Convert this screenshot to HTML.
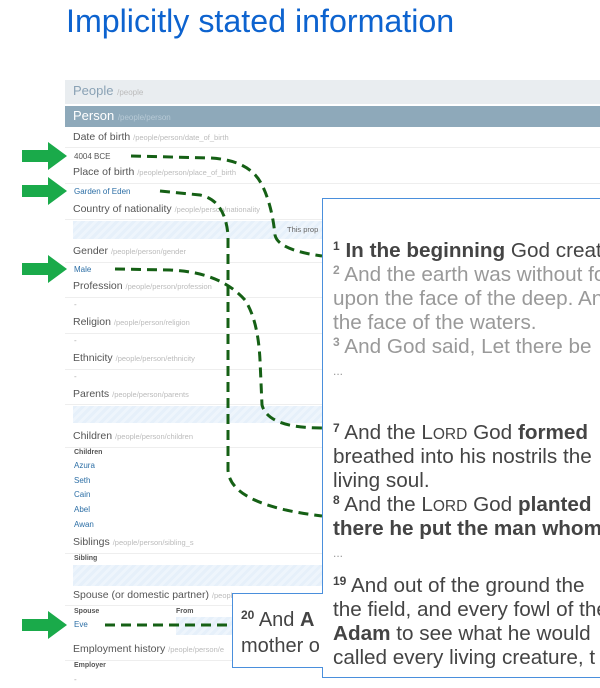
<!DOCTYPE html>
<html><head><meta charset="utf-8"><style>
*{margin:0;padding:0;box-sizing:border-box}
body{width:600px;height:688px;background:#fff;position:relative;overflow:hidden;font-family:"Liberation Sans",Arial,sans-serif}
.a{position:absolute;white-space:nowrap}
.t{left:66px;top:3px;font-size:32.2px;color:#0d63cf}
.lab{font-size:10.5px;color:#555;left:73px}
.lab i{font-style:normal;font-size:7.5px;color:#bbb}
.val{font-size:8px;color:#2d6fa6;left:74px}
.sub{font-size:7px;color:#555;font-weight:bold;left:74px}
.dash{font-size:8px;color:#aaa;left:74px}
.line{position:absolute;left:65px;right:0;height:1px;background:#eee}
.strip{position:absolute;left:73px;right:0;background:repeating-linear-gradient(135deg,#e6f0fa 0 3px,#eef5fc 3px 6px)}
.box{position:absolute;border:1.5px solid #4a8fdc;background:#fff}
.bt{position:absolute;left:10px;font-size:20.7px;color:#444;white-space:nowrap;line-height:24px;height:24px}
.g{color:#999}
.bt sup{font-size:12px;vertical-align:baseline;position:relative;top:-7px;line-height:0;font-weight:bold}
.sc{font-size:15.5px}
</style></head><body>
<div class="a t">Implicitly stated information</div>
<div class="a" style="left:65px;top:80px;width:535px;height:24px;background:#e9edf0"></div>
<div class="a" style="left:73px;top:83px;font-size:13px;color:#8aa2b5">People <span style="font-size:8px;color:#bbb">/people</span></div>
<div class="a" style="left:65px;top:106px;width:535px;height:21px;background:#8ea9ba"></div>
<div class="a" style="left:73px;top:108px;font-size:13px;color:#fff">Person <span style="font-size:8px;color:#b8cad6">/people/person</span></div>

<div class="a lab" style="top:131px">Date of birth <i>/people/person/date_of_birth</i></div>
<div class="line" style="top:147px"></div>
<div class="a val" style="top:152px;color:#555">4004 BCE</div>
<div class="a lab" style="top:166px">Place of birth <i>/people/person/place_of_birth</i></div>
<div class="line" style="top:183px"></div>
<div class="a val" style="top:187px">Garden of Eden</div>
<div class="a lab" style="top:203px">Country of nationality <i>/people/person/nationality</i></div>
<div class="line" style="top:219px"></div>
<div class="strip" style="top:221px;height:18px"></div>
<div class="a" style="left:287px;top:225px;font-size:7.5px;color:#666">This prop</div>
<div class="a lab" style="top:245px">Gender <i>/people/person/gender</i></div>
<div class="line" style="top:262px"></div>
<div class="a val" style="top:265px">Male</div>
<div class="a lab" style="top:280px">Profession <i>/people/person/profession</i></div>
<div class="line" style="top:297px"></div>
<div class="a dash" style="top:300px">-</div>
<div class="a lab" style="top:316px">Religion <i>/people/person/religion</i></div>
<div class="line" style="top:333px"></div>
<div class="a dash" style="top:336px">-</div>
<div class="a lab" style="top:352px">Ethnicity <i>/people/person/ethnicity</i></div>
<div class="line" style="top:369px"></div>
<div class="a dash" style="top:372px">-</div>
<div class="a lab" style="top:388px">Parents <i>/people/person/parents</i></div>
<div class="line" style="top:404px"></div>
<div class="strip" style="top:406px;height:17px"></div>
<div class="a lab" style="top:430px">Children <i>/people/person/children</i></div>
<div class="line" style="top:447px"></div>
<div class="a sub" style="top:449px">Children</div>
<div class="a val" style="top:461px">Azura</div>
<div class="a val" style="top:476px">Seth</div>
<div class="a val" style="top:490px">Cain</div>
<div class="a val" style="top:505px">Abel</div>
<div class="a val" style="top:520px">Awan</div>
<div class="a lab" style="top:536px">Siblings <i>/people/person/sibling_s</i></div>
<div class="line" style="top:553px"></div>
<div class="a sub" style="top:555px">Sibling</div>
<div class="strip" style="top:565px;height:21px"></div>
<div class="a lab" style="top:589px">Spouse (or domestic partner) <i>/people</i></div>
<div class="line" style="top:605px"></div>
<div class="a sub" style="top:608px">Spouse</div>
<div class="a sub" style="left:176px;top:608px">From</div>
<div class="strip" style="left:176px;right:auto;width:60px;top:617px;height:18px"></div>
<div class="a val" style="top:620px">Eve</div>
<div class="a lab" style="top:643px">Employment history <i>/people/person/e</i></div>
<div class="line" style="top:660px"></div>
<div class="a sub" style="top:662px">Employer</div>
<div class="a dash" style="top:675px">-</div>

<svg class="a" style="left:0;top:0" width="600" height="688">
<g fill="#1aaa4a">
<polygon points="22,150 48,150 48,142 67,156 48,170 48,162 22,162"/>
<polygon points="22,185 48,185 48,177 67,191 48,205 48,197 22,197"/>
<polygon points="22,263 48,263 48,255 67,269 48,283 48,275 22,275"/>
<polygon points="22,619 48,619 48,611 67,625 48,639 48,631 22,631"/>
</g>
<g fill="none" stroke="#156015" stroke-width="3" stroke-dasharray="10,6">
<path d="M131,156 L210,158 Q250,160 262,185 Q272,205 275,235 Q278,250 322,256"/>
<path d="M160,191 L200,195 Q225,200 228,235 L228,470 Q230,505 322,516"/>
<path d="M115,269 L170,270 Q220,272 245,300 Q258,320 260,360 L262,405 Q268,428 322,428"/>
<path d="M105,625 L232,625"/>
</g>
</svg>

<div class="box" style="left:322px;top:198px;width:290px;height:480px">
<div class="bt" style="top:40px"><sup>1</sup> <b>In the beginning</b> God created</div>
<div class="bt g" style="top:64px"><sup>2</sup> And the earth was without form</div>
<div class="bt g" style="top:88px">upon the face of the deep. And</div>
<div class="bt g" style="top:112px">the face of the waters.</div>
<div class="bt g" style="top:136px"><sup>3</sup> And God said, Let there be</div>
<div class="bt g" style="top:160px;font-size:12px">...</div>
<div class="bt" style="top:222px"><sup>7</sup> And the L<span class="sc">ORD</span> God <b>formed</b></div>
<div class="bt" style="top:246px">breathed into his nostrils the</div>
<div class="bt" style="top:270px">living soul.</div>
<div class="bt" style="top:294px"><sup>8</sup> And the L<span class="sc">ORD</span> God <b>planted</b></div>
<div class="bt" style="top:318px"><b>there he put the man whom</b></div>
<div class="bt g" style="top:342px;font-size:12px">...</div>
<div class="bt" style="top:375px"><sup>19</sup> And out of the ground the</div>
<div class="bt" style="top:399px">the field, and every fowl of the</div>
<div class="bt" style="top:423px"><b>Adam</b> to see what he would</div>
<div class="bt" style="top:447px">called every living creature, t</div>
</div>
<div class="box" style="left:232px;top:593px;width:91px;height:75px;overflow:hidden;border-right:none">
<div class="bt" style="left:8px;top:13px;font-size:20px;line-height:26px"><sup>20</sup> And <b>A</b></div>
<div class="bt" style="left:8px;top:39px;font-size:20px;line-height:26px">mother o</div>
</div>
</body></html>
